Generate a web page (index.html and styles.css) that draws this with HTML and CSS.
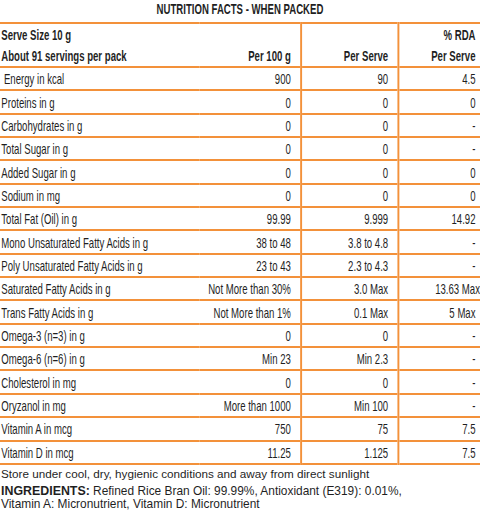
FILE: index.html
```html
<!DOCTYPE html>
<html>
<head>
<meta charset="utf-8">
<link rel="stylesheet" href="styles.css">
</head>
<body>
<div class="label">
  <div class="cond">
    <h1 class="title">NUTRITION FACTS - WHEN PACKED</h1>
    <table class="facts">
      <colgroup>
        <col class="c-name">
        <col class="c-100">
        <col class="c-serve">
        <col class="c-rda">
      </colgroup>
      <thead>
        <tr>
          <th class="name">Serve Size 10 g</th>
          <th></th>
          <th></th>
          <th>% RDA</th>
        </tr>
        <tr>
          <th class="name">About 91 servings per pack</th>
          <th>Per 100 g</th>
          <th>Per Serve</th>
          <th>Per Serve</th>
        </tr>
      </thead>
      <tbody>
        <tr><td class="name">&nbsp;Energy in kcal</td><td>900</td><td>90</td><td>4.5</td></tr>
        <tr><td class="name">Proteins in g</td><td>0</td><td>0</td><td>0</td></tr>
        <tr><td class="name">Carbohydrates in g</td><td>0</td><td>0</td><td>-</td></tr>
        <tr><td class="name">Total Sugar in g</td><td>0</td><td>0</td><td>-</td></tr>
        <tr><td class="name">Added Sugar in g</td><td>0</td><td>0</td><td>0</td></tr>
        <tr><td class="name">Sodium in mg</td><td>0</td><td>0</td><td>0</td></tr>
        <tr><td class="name">Total Fat (Oil) in g</td><td>99.99</td><td>9.999</td><td>14.92</td></tr>
        <tr><td class="name">Mono Unsaturated Fatty Acids in g</td><td>38 to 48</td><td>3.8 to 4.8</td><td>-</td></tr>
        <tr><td class="name">Poly Unsaturated Fatty Acids in g</td><td>23 to 43</td><td>2.3 to 4.3</td><td>-</td></tr>
        <tr><td class="name">Saturated Fatty Acids in g</td><td>Not More than 30%</td><td>3.0 Max</td><td class="wide">13.63 Max</td></tr>
        <tr><td class="name">Trans Fatty Acids in g</td><td>Not More than 1%</td><td>0.1 Max</td><td>5 Max</td></tr>
        <tr><td class="name">Omega-3 (n=3) in g</td><td>0</td><td>0</td><td>-</td></tr>
        <tr><td class="name">Omega-6 (n=6) in g</td><td>Min 23</td><td>Min 2.3</td><td>-</td></tr>
        <tr><td class="name">Cholesterol in mg</td><td>0</td><td>0</td><td>-</td></tr>
        <tr><td class="name">Oryzanol in mg</td><td>More than 1000</td><td>Min 100</td><td>-</td></tr>
        <tr><td class="name">Vitamin A in mcg</td><td>750</td><td>75</td><td>7.5</td></tr>
        <tr><td class="name">Vitamin D in mcg</td><td>11.25</td><td>1.125</td><td>7.5</td></tr>
      </tbody>
    </table>
  </div>
  <p class="store">Store under cool, dry, hygienic conditions and away from direct sunlight</p>
  <p class="ingr"><b>INGREDIENTS:</b> Refined Rice Bran Oil: 99.99%, Antioxidant (E319): 0.01%, Vitamin A: Micronutrient, Vitamin D: Micronutrient</p>
</div>
</body>
</html>
```
FILE: styles.css
```css
html, body {
  margin: 0;
  padding: 0;
  background: #ffffff;
}
.label {
  width: 480px;
  height: 511px;
  overflow: hidden;
  color: #1f1f1f;
}
/* condensed type: laid out wide, then squeezed horizontally */
.cond {
  width: 750px;
  transform: scaleX(0.64);
  transform-origin: 0 0;
  font-family: "Liberation Sans", Arial, sans-serif;
}
.title {
  margin: 0;
  height: 22px;
  line-height: 17px;
  text-align: center;
  font-weight: bold;
  font-size: 15px;
}
.facts {
  width: 750px;
  border-collapse: collapse;
  table-layout: fixed;
  font-size: 15px;
  border-top: 2px solid #f3913a;
}
.c-name { width: 312px; }
.c-100 { width: 158px; }
.c-serve { width: 152px; }
.c-rda { width: 128px; }
.facts th, .facts td {
  height: 21.35px;
  padding: 0 14px 0 0;
  text-align: right;
  white-space: nowrap;
  vertical-align: middle;
}
.facts thead th {
  height: 21px;
  font-weight: bold;
}
.facts .name {
  text-align: left;
  padding: 0 0 0 2px;
}
.facts tr > :nth-child(3),
.facts tr > :nth-child(4) {
  border-left: 3px solid #f3913a;
}
.facts tr > :nth-child(4) {
  padding-right: 7px;
}
.facts td.wide {
  padding-right: 0;
}
.facts tbody tr {
  border-top: 2px solid #f3913a;
}
.facts tbody tr:last-child {
  border-bottom: 2px solid #f3913a;
}
.store {
  margin: 1px 0 0 1px;
  font-family: "Liberation Sans", Arial, sans-serif;
  font-size: 11.7px;
  line-height: 15px;
}
.ingr {
  max-width: 410px;
  margin: 4px 0 0 1px;
  font-family: "Liberation Sans", Arial, sans-serif;
  font-size: 11.9px;
  line-height: 13px;
}
.ingr b {
  font-size: 12.4px;
}
```
